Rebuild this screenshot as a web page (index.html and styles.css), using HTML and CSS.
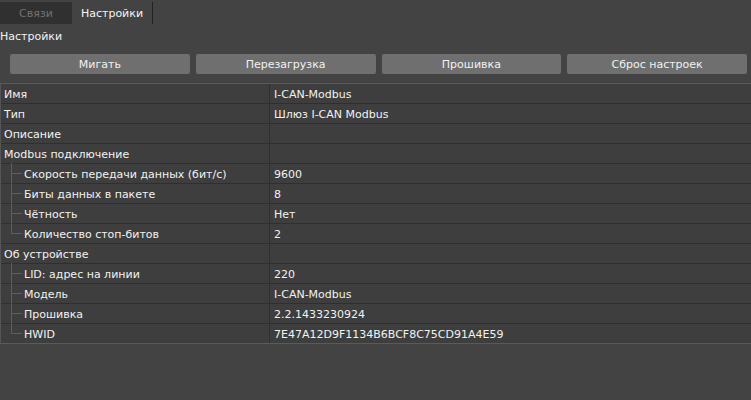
FILE: index.html
```html
<!DOCTYPE html>
<html lang="ru">
<head>
    <meta charset="UTF-8">
    <title>Настройки</title>
    <link rel="stylesheet" href="styles.css">
</head>
<body>
    <div class="tabs">
        <div class="tab">Связи</div>
        <div class="tab active">Настройки</div>
    </div>
    <div class="caption">Настройки</div>
    <div class="buttons">
        <div class="button">Мигать</div>
        <div class="button">Перезагрузка</div>
        <div class="button">Прошивка</div>
        <div class="button">Сброс настроек</div>
    </div>
    <div class="props">
        <div class="row"><div class="name">Имя</div><div class="value">I-CAN-Modbus</div></div>
        <div class="row"><div class="name">Тип</div><div class="value">Шлюз I-CAN Modbus</div></div>
        <div class="row"><div class="name">Описание</div><div class="value"></div></div>
        <div class="row"><div class="name">Modbus подключение</div><div class="value"></div></div>
        <div class="row"><div class="name child">Скорость передачи данных (бит/с)</div><div class="value">9600</div></div>
        <div class="row"><div class="name child">Биты данных в пакете</div><div class="value">8</div></div>
        <div class="row"><div class="name child">Чётность</div><div class="value">Нет</div></div>
        <div class="row"><div class="name child last">Количество стоп-битов</div><div class="value">2</div></div>
        <div class="row"><div class="name">Об устройстве</div><div class="value"></div></div>
        <div class="row"><div class="name child">LID: адрес на линии</div><div class="value">220</div></div>
        <div class="row"><div class="name child">Модель</div><div class="value">I-CAN-Modbus</div></div>
        <div class="row"><div class="name child">Прошивка</div><div class="value">2.2.1433230924</div></div>
        <div class="row"><div class="name child last">HWID</div><div class="value">7E47A12D9F1134B6BCF8C75CD91A4E59</div></div>
    </div>
</body>
</html>
```

FILE: styles.css
```css
body{
    margin: 0;
    background-color: #434343;
    color: #f2f2f2;
    font-family: "DejaVu Sans", Tahoma, sans-serif;
    font-size: 11px;
}
.tabs{
    display: flex;
    padding-top: 2px;
    height: 22px;
}
.tab{
    width: 72px;
    display: flex;
    align-items: center;
    justify-content: center;
    background-color: #303030;
    color: #737373;
}
.tab.active{
    width: 80px;
    background-color: #434343;
    color: #f4f4f4;
    border-right: 1px solid #222;
}
.caption{
    height: 14px;
    line-height: 14px;
    margin-top: 6px;
}
.buttons{
    display: grid;
    grid-template-columns: repeat(4, 1fr);
    gap: 6px;
    padding: 10px 4px 0 10px;
}
.button{
    height: 20px;
    display: flex;
    align-items: center;
    justify-content: center;
    background-color: #6f6f6f;
    border-radius: 2px;
    color: #f2f2f2;
}
.props{
    margin-top: 9px;
    border-top: 1px solid #5a5a5a;
    border-left: 1px solid #555;
    background-color: #3e3e3e;
}
.row{
    display: grid;
    grid-template-columns: 269px 1fr;
    height: 19px;
    border-bottom: 1px solid #2f2f2f;
}
.row:last-child{
    border-bottom: 1px solid #5a5a5a;
}
.name, .value{
    display: flex;
    align-items: center;
    padding-top: 1px;
    padding-left: 3px;
    white-space: nowrap;
}
.name{
    border-right: 1px solid #2f2f2f;
    position: relative;
}
.value{
    padding-left: 4px;
}
.name.child{
    padding-left: 23px;
}
.name.child::before{
    content: "";
    position: absolute;
    left: 10px;
    top: -1px;
    bottom: -1px;
    border-left: 1px solid #5e5e5e;
}
.name.child.last::before{
    bottom: 9px;
}
.name.child::after{
    content: "";
    position: absolute;
    left: 10px;
    top: 9px;
    width: 11px;
    border-top: 1px solid #5e5e5e;
}
```
